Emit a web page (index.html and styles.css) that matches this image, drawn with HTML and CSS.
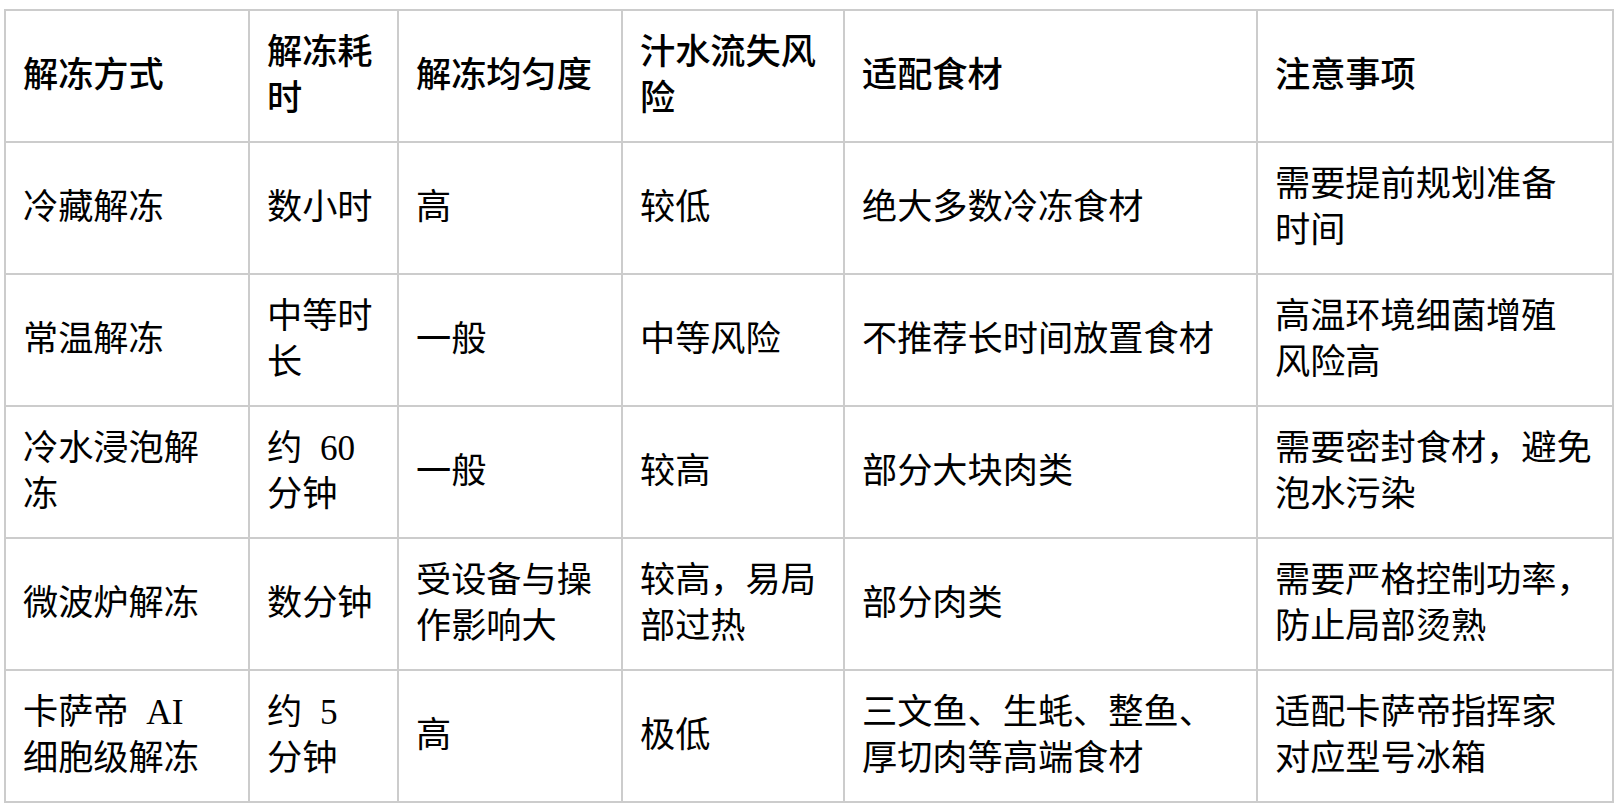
FILE: index.html
```html
<!DOCTYPE html>
<html lang="zh-CN">
<head>
<meta charset="utf-8">
<title>解冻方式对比</title>
<link rel="stylesheet" href="styles.css">
</head>
<body>
<div class="page">
<table class="compare">
<colgroup>
<col class="c1"><col class="c2"><col class="c3"><col class="c4"><col class="c5"><col class="c6">
</colgroup>
<thead>
<tr><th>解冻方式</th><th>解冻耗<br>时</th><th>解冻均匀度</th><th>汁水流失风<br>险</th><th>适配食材</th><th>注意事项</th></tr>
</thead>
<tbody>
<tr><td>冷藏解冻</td><td>数小时</td><td>高</td><td>较低</td><td>绝大多数冷冻食材</td><td>需要提前规划准备<br>时间</td></tr>
<tr><td>常温解冻</td><td>中等时<br>长</td><td>一般</td><td>中等风险</td><td>不推荐长时间放置食材</td><td>高温环境细菌增殖<br>风险高</td></tr>
<tr><td>冷水浸泡解<br>冻</td><td>约 60<br>分钟</td><td>一般</td><td>较高</td><td>部分大块肉类</td><td>需要密封食材，避免<br>泡水污染</td></tr>
<tr><td>微波炉解冻</td><td>数分钟</td><td>受设备与操<br>作影响大</td><td>较高，易局<br>部过热</td><td>部分肉类</td><td>需要严格控制功率，<br>防止局部烫熟</td></tr>
<tr><td>卡萨帝 AI<br>细胞级解冻</td><td>约 5<br>分钟</td><td>高</td><td>极低</td><td>三文鱼、生蚝、整鱼、<br>厚切肉等高端食材</td><td>适配卡萨帝指挥家<br>对应型号冰箱</td></tr>
</tbody>
</table>
</div>
</body>
</html>
```
FILE: styles.css
```css
html, body {
  margin: 0;
  padding: 0;
  background: #ffffff;
}
.page {
  padding: 9px 0 0 4px;
}
.compare {
  border-collapse: collapse;
  table-layout: fixed;
  width: 1608px;
  font-family: "Liberation Serif", "Noto Sans CJK SC", serif;
  font-size: 35.2px;
  line-height: 46px;
  word-spacing: 9px;
  color: #000;
}
.c1 { width: 244px; }
.c2 { width: 149px; }
.c3 { width: 224px; }
.c4 { width: 222px; }
.c5 { width: 413px; }
.c6 { width: 356px; }
.compare th,
.compare td {
  border: 2px solid #cccccc;
  padding: 19px 8px 19px 17px;
  text-align: left;
  vertical-align: middle;
  white-space: nowrap;
  overflow: visible;
  height: 92px;
}
.compare th {
  font-weight: 500;
}
```
